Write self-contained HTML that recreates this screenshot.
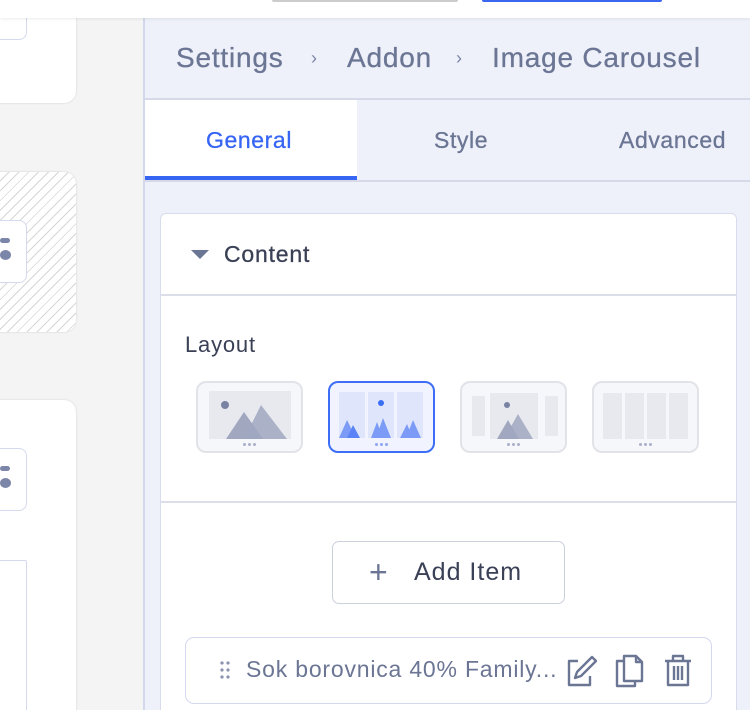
<!DOCTYPE html>
<html><head><style>
*{box-sizing:border-box;margin:0;padding:0}
html,body{width:750px;height:710px;overflow:hidden}
body{background:#f4f4f4;font-family:"Liberation Sans",sans-serif;position:relative}
.abs{position:absolute;white-space:nowrap}
.card{position:absolute;left:-20px;width:96px;background:#fff;border-radius:12px;box-shadow:0 0 2px rgba(0,0,0,.15)}
.ib{position:absolute;border:1.5px solid #d5d9ee;border-radius:8px;background:#fff}
.dash{position:absolute;background:#7c86a8;border-radius:3px}
.lay{position:absolute;top:381px;width:107px;height:72px;border:2px solid #e2e3e8;border-radius:10px;background:#f6f7fa}
.dots{position:absolute;left:0;right:0;bottom:5px;text-align:center;font-size:0}
.dots i{display:inline-block;width:3px;height:3px;border-radius:50%;background:#aab0c8;margin:0 1px}
.bc{font-size:28px;color:#6b7594;letter-spacing:.8px;top:42px;-webkit-text-stroke:.3px #6b7594}
.tab{font-size:23px;top:127px;letter-spacing:.6px;-webkit-text-stroke:.3px currentColor}
</style></head><body>
<div class="abs" style="left:0;top:0;width:750px;height:18px;background:#fff;box-shadow:0 1px 3px rgba(0,0,0,.08);z-index:2"></div>
<div class="abs" style="left:272px;top:0;width:186px;height:2px;background:#ccc;border-radius:0 0 4px 4px;z-index:3"></div>
<div class="abs" style="left:482px;top:0;width:180px;height:2px;background:#3a66f0;border-radius:0 0 4px 4px;z-index:3"></div>

<div class="card" style="top:-10px;height:113px"></div>
<div class="ib" style="left:-10px;top:-5px;width:37px;height:45px"></div>
<div class="card" style="top:172px;height:160px;background:repeating-linear-gradient(135deg,#fff 0 6px,#d6d6d6 6px 7px)"></div>
<div class="ib" style="left:-10px;top:220px;width:37px;height:63px"></div>
<div class="dash" style="left:0;top:238px;width:10px;height:5px"></div>
<div class="dash" style="left:0;top:250px;width:11px;height:10px;border-radius:50%"></div>
<div class="card" style="top:400px;height:330px"></div>
<div class="ib" style="left:-10px;top:448px;width:37px;height:63px"></div>
<div class="dash" style="left:0;top:466px;width:10px;height:5px"></div>
<div class="dash" style="left:0;top:478px;width:11px;height:10px;border-radius:50%"></div>
<div class="ib" style="left:-10px;top:560px;width:37px;height:170px;border-radius:2px"></div>

<div class="abs" style="left:143px;top:18px;width:607px;height:692px;background:#eef1f9;border-left:2px solid #d3d8ec"></div>
<div class="abs bc" style="left:176px">Settings</div>
<div class="abs" style="left:311px;top:48px;font-size:18px;color:#7c86a8">›</div>
<div class="abs bc" style="left:347px">Addon</div>
<div class="abs" style="left:456px;top:48px;font-size:18px;color:#7c86a8">›</div>
<div class="abs bc" style="left:492px">Image Carousel</div>
<div class="abs" style="left:145px;top:98px;width:605px;height:2px;background:#d5d9e8"></div>
<div class="abs" style="left:145px;top:100px;width:212px;height:80px;background:#fff"></div>
<div class="abs" style="left:145px;top:176px;width:212px;height:4px;background:#3665f3"></div>
<div class="abs" style="left:145px;top:180px;width:605px;height:2px;background:#d5d9e8"></div>
<div class="abs tab" style="left:206px;color:#3665f3">General</div>
<div class="abs tab" style="left:434px;color:#6b7594">Style</div>
<div class="abs tab" style="left:619px;color:#6b7594">Advanced</div>

<div class="abs" style="left:160px;top:213px;width:577px;height:520px;background:#fff;border:1.5px solid #d9dcea;border-radius:6px"></div>
<div class="abs" style="left:161px;top:294px;width:575px;height:2px;background:#dcdfe9"></div>
<div class="abs" style="left:191px;top:250px;width:0;height:0;border-left:9px solid transparent;border-right:9px solid transparent;border-top:9px solid #6b7594"></div>
<div class="abs" style="left:224px;top:241px;font-size:23px;letter-spacing:.8px;color:#3a4055;-webkit-text-stroke:.3px #3a4055">Content</div>
<div class="abs" style="left:185px;top:332px;font-size:22px;letter-spacing:.8px;color:#3a4055">Layout</div>

<div class="lay" style="left:196px">
<svg class="abs" style="left:11px;top:8px" width="82" height="48"><rect width="82" height="48" fill="#e8e9ef"/><circle cx="16" cy="14" r="4" fill="#7a82a4"/><polygon points="17,48 35,21 54,48" fill="#a0a7bf"/><polygon points="35,48 52,14 78,48" fill="#a0a7bf" opacity=".85"/></svg>
<div class="dots"><i></i><i></i><i></i></div></div>
<div class="lay" style="left:328px;border-color:#3d6ef5;background:#f1f4fe">
<svg class="abs" style="left:9px;top:9px" width="88" height="46"><rect x="0" width="26" height="46" fill="#dfe6fb"/><rect x="29" width="26" height="46" fill="#dfe6fb"/><rect x="58" width="26" height="46" fill="#dfe6fb"/><circle cx="42" cy="11" r="3" fill="#3a6ff5"/><polygon points="0,46 8,28 17,46" fill="#7c9bf7"/><polygon points="8,46 14,33 21,46" fill="#5b82f6"/><polygon points="32,46 38,30 44,46" fill="#7c9bf7"/><polygon points="37,46 44,26 52,46" fill="#7c9bf7"/><polygon points="61,46 68,32 74,46" fill="#7c9bf7"/><polygon points="67,46 74,28 82,46" fill="#7c9bf7"/></svg>
<div class="dots"><i style="background:#8da6f5"></i><i style="background:#8da6f5"></i><i style="background:#8da6f5"></i></div></div>
<div class="lay" style="left:460px">
<svg class="abs" style="left:10px;top:10px" width="88" height="46"><rect x="0" y="3" width="13" height="40" fill="#e8e9ef"/><rect x="18" width="48" height="46" fill="#e8e9ef"/><rect x="73" y="3" width="13" height="40" fill="#e8e9ef"/><circle cx="35" cy="12" r="3" fill="#7a82a4"/><polygon points="25,46 36,27 47,46" fill="#a0a7bf"/><polygon points="32,46 46,21 61,46" fill="#a0a7bf" opacity=".85"/></svg>
<div class="dots"><i></i><i></i><i></i></div></div>
<div class="lay" style="left:592px">
<svg class="abs" style="left:9px;top:10px" width="88" height="46"><rect x="0" width="19" height="46" fill="#e8e9ef"/><rect x="22" width="19" height="46" fill="#e8e9ef"/><rect x="44" width="19" height="46" fill="#e8e9ef"/><rect x="66" width="19" height="46" fill="#e8e9ef"/></svg>
<div class="dots"><i></i><i></i><i></i></div></div>

<div class="abs" style="left:161px;top:501px;width:575px;height:2px;background:#dcdfe9"></div>
<div class="abs" style="left:332px;top:541px;width:233px;height:63px;border:1.5px solid #ccd0dc;border-radius:7px;background:#fff"></div>
<div class="abs" style="left:369px;top:558px;font-size:32px;line-height:28px;color:#6b7594">+</div>
<div class="abs" style="left:414px;top:558px;font-size:25px;letter-spacing:1px;color:#3a4055">Add Item</div>

<div class="abs" style="left:185px;top:637px;width:527px;height:67px;border:1.5px solid #d3d8ee;border-radius:9px;background:#fff"></div>
<svg class="abs" style="left:219px;top:660px" width="12" height="20"><g fill="#8a92ad"><circle cx="3" cy="3" r="1.6"/><circle cx="9" cy="3" r="1.6"/><circle cx="3" cy="10" r="1.6"/><circle cx="9" cy="10" r="1.6"/><circle cx="3" cy="17" r="1.6"/><circle cx="9" cy="17" r="1.6"/></g></svg>
<div class="abs" style="left:246px;top:656px;font-size:23px;letter-spacing:.8px;color:#6b7594">Sok borovnica 40% Family...</div>
<svg class="abs" style="left:565px;top:654px" width="32" height="34" fill="none" stroke="#6b7594" stroke-width="2.4" stroke-linejoin="round"><path d="M13 7H4v24h21v-9"/><path d="M27 3l4 4-15 15-6 2 2-6z"/></svg>
<svg class="abs" style="left:614px;top:653px" width="32" height="36" fill="none" stroke="#6b7594" stroke-width="2.4" stroke-linejoin="round"><path d="M9 8H3v25h18v-5"/><path d="M10 3h12l6 6v19H10z"/><path d="M22 3v6h6"/></svg>
<svg class="abs" style="left:662px;top:653px" width="32" height="36" fill="none" stroke="#6b7594" stroke-width="2.4" stroke-linejoin="round"><path d="M3 8h26M11 8V3h10v5M6 8v24h20V8M12 13v14M16 13v14M20 13v14"/></svg>
</body></html>
